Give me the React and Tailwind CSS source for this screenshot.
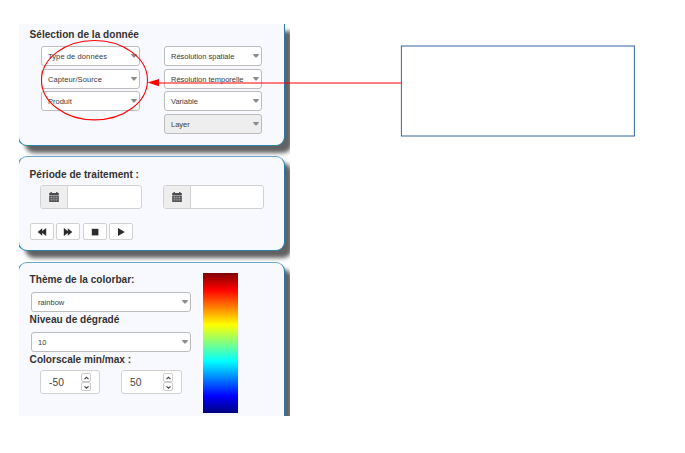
import React from "react";

function Caret({ className }) {
  return (
    <svg className={"shrink-0 " + className} width="6" height="4" viewBox="0 0 6 4">
      <path d="M.2 0h5.6v.7L3.6 3.4H2.4L.2.7z" fill="#8c8c8c" />
    </svg>
  );
}

function Select({ label, disabled, className = "w-[98px]" }) {
  return (
    <div
      className={
        "flex h-[20px] shrink-0 justify-between rounded-[3px] border border-[#bcbcbc] pl-[6px] pr-[2.5px] " +
        (disabled ? "bg-[#eeeeee] " : "bg-white ") +
        className
      }
    >
      <span className="whitespace-nowrap text-[7.5px] leading-[20px] text-[#3a3a3a]">{label}</span>
      <Caret className="mt-[7px]" />
    </div>
  );
}

function Title({ children, className = "" }) {
  return (
    <h2 className={"whitespace-nowrap pl-[10.6px] text-[10.1px] font-bold leading-[12px] text-[#333] " + className}>
      {children}
    </h2>
  );
}

function Panel({ children, className }) {
  return (
    <section
      className={
        "-ml-px w-[267px] shrink-0 border border-[#2d83ad] border-t-[#68a9c9] border-r-[#247aa5] bg-[#f8f9ff] shadow-[7px_7px_4px_#626262] " +
        className
      }
    >
      {children}
    </section>
  );
}

function DateField({ className }) {
  return (
    <div className={"flex h-[24px] overflow-hidden rounded-[3px] border border-[#d2d2d2] bg-white " + className}>
      <div className="flex w-[27px] items-center justify-center border-r border-[#d2d2d2] bg-[#eee]">
        <svg width="10" height="10" viewBox="0 0 10 10">
          <path d="M.2 1h1.3V0h1.4v1h4.2V0h1.4v1h1.3v2.1H.2zM.2 3.6h9.6V10H.2z" fill="#4b4b4f" />
          <path d="M.8 5.6h8.4M.8 7.8h8.4M2.7 4v5.5M5 4v5.5M7.3 4v5.5" stroke="#aaa" strokeWidth=".55" />
        </svg>
      </div>
    </div>
  );
}

function Button({ d }) {
  return (
    <div className="flex h-[17px] w-[24px] items-center justify-center rounded-[2px] border border-[#d2d2d2] bg-white">
      <svg className="relative top-[0.5px]" width="10" height="8" viewBox="0 0 10 8">
        <path d={d} fill="#2c2c2c" />
      </svg>
    </div>
  );
}

function NumberField({ value, className }) {
  return (
    <div className={"flex h-[24px] items-center justify-between rounded-[3px] border border-[#d2d2d2] bg-white pl-[8px] text-[10.3px] text-[#444] " + className}>
      <span className="pt-px">{value}</span>
      <div className="flex flex-col">
        {["M1.5 4.2L3.5 2.3 5.5 4.2", "M1.5 2.3L3.5 4.2 5.5 2.3"].map((d) => (
          <div key={d} className="flex h-[9px] w-[10px] items-center justify-center rounded-[2px] border border-[#ccc] bg-white">
            <svg className="shrink-0" width="7" height="6" viewBox="0 0 7 6">
              <path d={d} fill="none" stroke="#444" strokeWidth="1.1" />
            </svg>
          </div>
        ))}
      </div>
    </div>
  );
}

export default function App() {
  return (
    <main className="relative h-[453px] w-[685px] overflow-hidden bg-white pl-[19px] pt-[24px] font-['Liberation_Sans',Arial,sans-serif]">
      <div className="flex h-[392px] w-[271px] flex-col overflow-hidden">
        <Panel className="h-[122px] rounded-b-[9px] border-t-0">
          <Title className="pt-[5px]">Sélection de la donnée</Title>
          <div className="flex items-start gap-[24px] pl-[22px] pt-[5px]">
            <div className="flex w-[99px] flex-col">
              <Select label="Type de données" className="w-[99px] tracking-[0.1px]" />
              <Select label="Capteur/Source" className="mt-[3px] w-[99px] tracking-[0.1px]" />
              <Select label="Produit" className="mt-[2px] w-[99px]" />
            </div>
            <div className="flex flex-col">
              <Select label="Résolution spatiale" />
              <Select label="Résolution temporelle" className="mt-[3px] w-[98px]" />
              <Select label="Variable" className="mt-[2px] w-[98px]" />
              <Select label="Layer" disabled className="mt-[3px] w-[98px]" />
            </div>
          </div>
        </Panel>

        <Panel className="mt-[10px] h-[95px] rounded-[9px]">
          <Title className="pt-[12px]">Période de traitement :</Title>
          <div className="flex gap-[21px] pl-[21px] pt-[4px]">
            <DateField className="w-[102px]" />
            <DateField className="w-[101px]" />
          </div>
          <div className="flex gap-[2.4px] pl-[11px] pt-[14px]">
            <Button d="M5.2 .2v2.7L9.2 0v8L5.2 5.1v2.7L.7 4z" />
            <Button d="M4.8 .2v2.7L.8 0v8L4.8 5.1v2.7L9.3 4z" />
            <Button d="M1.8 .8h6.6v6.6H1.8z" />
            <Button d="M2 0L8.8 4 2 8z" />
          </div>
        </Panel>

        <Panel className="mt-[11px] h-[170px] rounded-t-[9px]">
          <div className="flex">
            <div className="w-[184px]">
              <Title className="pt-[11px]">Thème de la colorbar:</Title>
              <Select label="rainbow" className="ml-[12px] mt-[6px] w-[160px]" />
              <Title className="pt-[2px]">Niveau de dégradé</Title>
              <Select label="10" className="ml-[12px] mt-[6px] w-[160px]" />
              <Title className="pt-[2px]">Colorscale min/max :</Title>
              <div className="flex gap-[21px] pl-[21px] pt-[4px]">
                <NumberField value="-50" className="w-[60px] pr-[8px]" />
                <NumberField value="50" className="w-[61px] pr-[8px]" />
              </div>
            </div>
            <div className="mt-[10px] h-[140px] w-[35px] bg-[linear-gradient(to_bottom,#800000_0%,#ff0000_12%,#ffff00_37%,#00ffff_63%,#0000ff_88%,#000080_100%)]" />
          </div>
        </Panel>
      </div>

      <svg className="pointer-events-none absolute left-0 top-0" width="685" height="453" viewBox="0 0 685 453">
        <rect x="401.4" y="46" width="233" height="90" fill="#fff" stroke="#3465a4" strokeWidth="1" />
        <ellipse cx="94.5" cy="80.2" rx="53" ry="39.7" fill="none" stroke="#f00" strokeWidth="1.1" />
        <path d="M401 83H158" stroke="#f00" strokeWidth="1.1" />
        <path d="M147.5 82.6l11.5-3.7v7.4z" fill="#f00" />
      </svg>
    </main>
  );
}
